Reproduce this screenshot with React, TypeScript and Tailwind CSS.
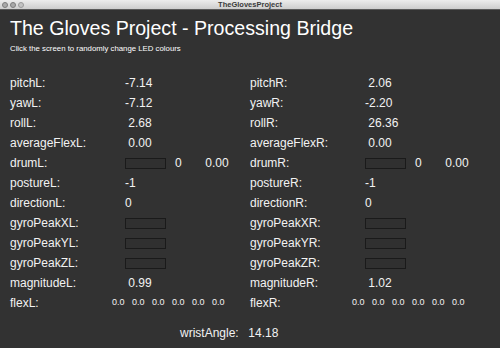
import React from "react";

const font = { fontFamily: '"Liberation Sans", Arial, Helvetica, sans-serif' };

type Side = {
  pitch: string; yaw: string; roll: string; avg: string; drumA: string; drumB: string;
  posture: string; direction: string; mag: string;
};

const L: Side = { pitch: "-7.14", yaw: "-7.12", roll: " 2.68", avg: " 0.00", drumA: "0", drumB: " 0.00", posture: "-1", direction: "0", mag: " 0.99" };
const R: Side = { pitch: " 2.06", yaw: "-2.20", roll: " 26.36", avg: " 0.00", drumA: "0", drumB: " 0.00", posture: "-1", direction: "0", mag: " 1.02" };

function Box() {
  return <div className="w-[41px] h-[11px] border border-[#1a1a1a] bg-[#303030]" />;
}

function Half({ label, children, labelW = "w-[115px]" }: { label: string; children?: React.ReactNode; labelW?: string }) {
  return (
    <div className="w-[240px] flex items-center">
      <div className={`${labelW} shrink-0`}>{label}</div>
      <div className="flex items-center whitespace-pre">{children}</div>
    </div>
  );
}

function Drum({ s }: { s: Side }) {
  return (
    <>
      <Box />
      <span className="ml-[9px] w-[27px]">{s.drumA}</span>
      <span>{s.drumB}</span>
    </>
  );
}

function Flex() {
  return (
    <div className="flex text-[9px]">
      {[0, 1, 2, 3, 4, 5].map((i) => (
        <span key={i} className="w-[20px]">0.0</span>
      ))}
    </div>
  );
}

export default function App() {
  const rows: [string, (s: Side) => React.ReactNode][] = [
    ["pitch", (s) => s.pitch],
    ["yaw", (s) => s.yaw],
    ["roll", (s) => s.roll],
    ["averageFlex", (s) => s.avg],
    ["drum", (s) => <Drum s={s} />],
    ["posture", (s) => s.posture],
    ["direction", (s) => s.direction],
    ["gyroPeakX", () => <Box />],
    ["gyroPeakY", () => <Box />],
    ["gyroPeakZ", () => <Box />],
    ["magnitude", (s) => s.mag],
  ];
  return (
    <div className="w-[500px] h-[348px] bg-[#323232] text-[#f2f2f2] flex flex-col overflow-hidden" style={font}>
      <div className="h-[10px] shrink-0 relative bg-gradient-to-b from-[#ececec] to-[#cdcdcd] border-b border-[#5a5a5a] flex items-center justify-center">
        <div className="absolute left-[2px] top-[2px] flex gap-[2px]">
          <div className="w-[6px] h-[6px] rounded-full bg-[#a9a9a9] border border-[#7d7d7d]" />
          <div className="w-[6px] h-[6px] rounded-full bg-[#a9a9a9] border border-[#7d7d7d]" />
          <div className="w-[6px] h-[6px] rounded-full bg-[#c4c4c4] border border-[#9a9a9a]" />
        </div>
        <span className="text-[7.5px] leading-[10px] font-bold text-[#3a3a3a]">TheGlovesProject</span>
      </div>
      <div className="pl-[10px] flex flex-col">
        <div className="pt-[6px] text-[19.6px] leading-[24px] text-white">The Gloves Project - Processing Bridge</div>
        <div className="mt-[4px] text-[7.8px] leading-[10px] text-white">Click the screen to randomly change LED colours</div>
        <div className="mt-[19px] flex flex-col text-[12px]">
          {rows.map(([name, fn]) => (
            <div key={name} className="h-[20px] flex items-center">
              <Half label={`${name}L:`}>{fn(L)}</Half>
              <Half label={`${name}R:`}>{fn(R)}</Half>
            </div>
          ))}
          <div className="h-[20px] flex items-center">
            <Half label="flexL:" labelW="w-[102px]"><Flex /></Half>
            <Half label="flexR:" labelW="w-[102px]"><Flex /></Half>
          </div>
          <div className="mt-[10px] h-[20px] flex items-center pl-[170px] whitespace-pre">
            <span className="w-[65px]">wristAngle:</span>
            <span> 14.18</span>
          </div>
        </div>
      </div>
    </div>
  );
}
